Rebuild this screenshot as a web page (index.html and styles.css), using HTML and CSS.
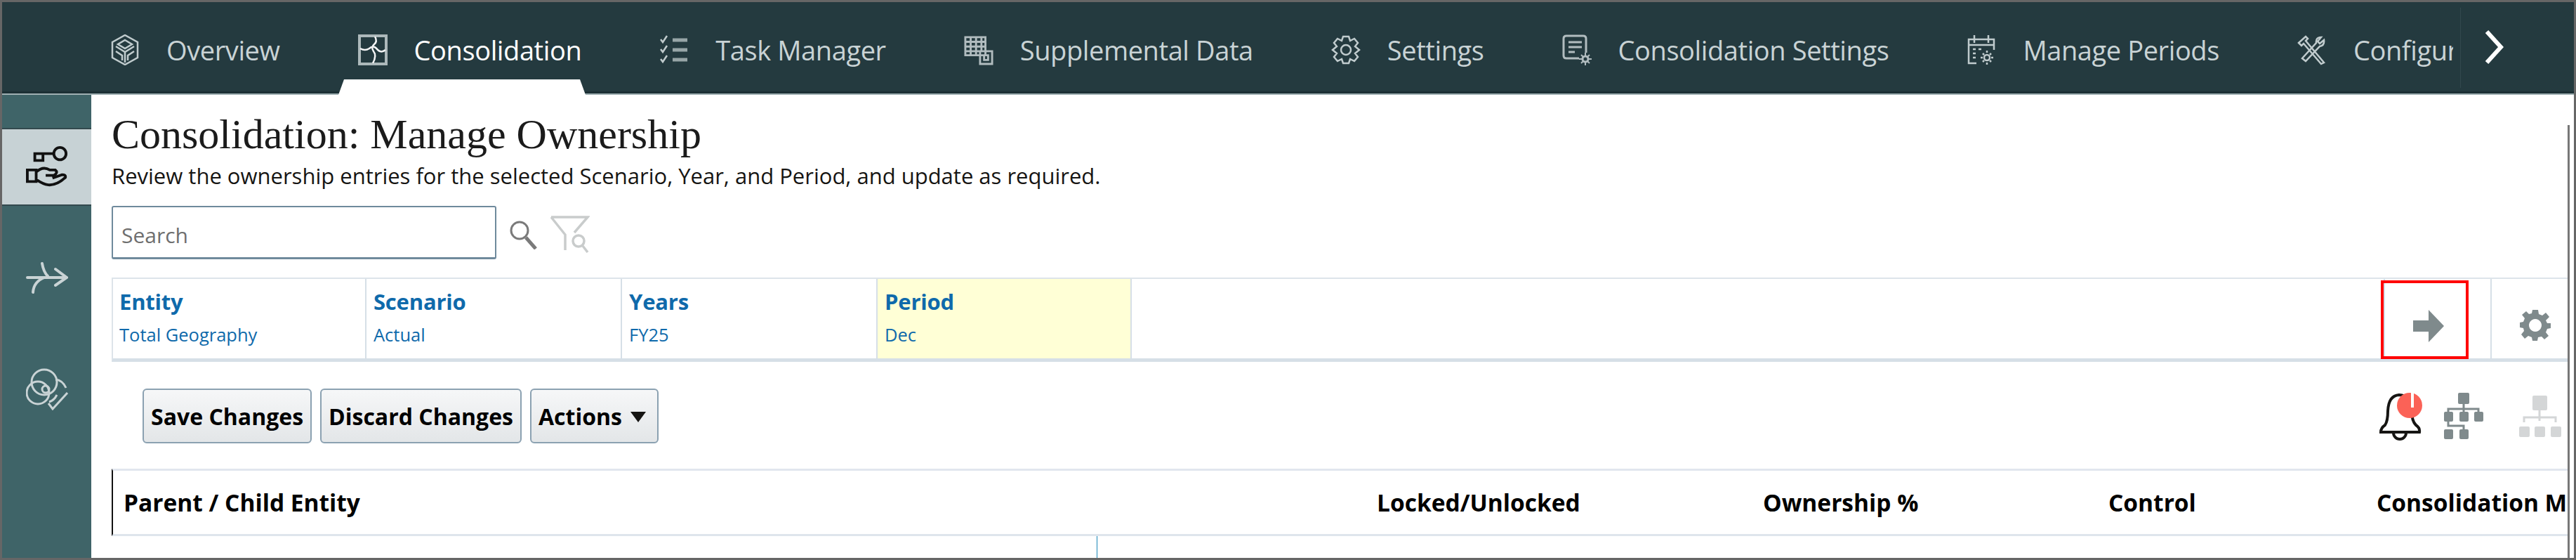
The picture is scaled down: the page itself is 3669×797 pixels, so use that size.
FILE: index.html
```html
<!DOCTYPE html>
<html lang="en">
<head>
  <meta charset="UTF-8">
  <title>Consolidation: Manage Ownership</title>
  <link rel="stylesheet" href="styles.css">
</head>
<body>
  <div class="frame">
    <!-- Top navigation -->
    <header class="topbar">
      <nav class="nav-items">
        <a class="nav-item">
          <svg class="nav-icon" viewBox="0 0 42 44"><path d="M21 1 39 11V33L21 43 3 33V11Z M21 8 31 14 21 20 11 14Z M8 17 21 25 34 17 M8 24 17 30V37 M34 24 25 30V37 M21 25V40"/></svg>
          <span>Overview</span>
        </a>
        <a class="nav-item active">
          <svg class="nav-icon" viewBox="0 0 42 44"><rect class="icon-frame" x="2" y="2" width="38" height="40"/><path d="M24 3Q28 10 23 14 18 18 22 24 27 30 21 41 M3 20Q10 24 16 20 22 14 28 22 33 27 39 22"/></svg>
          <span>Consolidation</span>
        </a>
        <a class="nav-item">
          <svg class="nav-icon" viewBox="0 0 42 44"><path d="M2 7l3 4 6-9 M2 21l3 4 6-9 M2 35l3 4 6-9"/><path class="icon-bar" d="M19 8H40 M19 22H40 M19 36H40"/></svg>
          <span>Task Manager</span>
        </a>
        <a class="nav-item">
          <svg class="nav-icon heavy" viewBox="0 0 44 44"><path d="M2 3H32V30H2Z M2 10H32 M2 17H32 M2 24H24 M10 3V30 M18 3V30 M26 3V24 M24 24H42V43H24Z M30 30h6v7h-6z"/></svg>
          <span>Supplemental Data</span>
        </a>
        <a class="nav-item">
          <svg class="nav-icon" viewBox="0 0 42 44"><circle cx="21" cy="22" r="7"/><path d="M17 3H25L27 9 33 6 38 12 34 17 40 22 34 27 38 32 33 38 27 35 25 41H17L15 35 9 38 4 32 8 27 2 22 8 17 4 12 9 6 15 9Z"/></svg>
          <span>Settings</span>
        </a>
        <a class="nav-item">
          <svg class="nav-icon heavy" viewBox="0 0 42 44"><path d="M24 34H6Q2 34 2 30V6Q2 2 6 2H30Q34 2 34 6V26 M9 11H28 M9 18H28 M9 25H18"/><circle cx="33" cy="35" r="4"/><path class="icon-thin" d="M33 26v4 M33 40v4 M24 35h4 M38 35h4 M27 29l3 3 M36 38l3 3 M39 29l-3 3 M30 38l-3 3"/></svg>
          <span>Consolidation Settings</span>
        </a>
        <a class="nav-item">
          <svg class="nav-icon" viewBox="0 0 42 44"><path d="M14 41H3V7H39V22 M11 1V12 M31 1V12 M3 15H39 M9 21h4 M17 21h4 M9 27h4 M9 33h4"/><circle cx="29" cy="33" r="4"/><path d="M29 23v3 M29 40v3 M20 33h3 M35 33h3 M23 27l2 2 M33 37l2 2 M35 27l-2 2 M25 37l-2 2"/></svg>
          <span>Manage Periods</span>
        </a>
        <a class="nav-item">
          <svg class="nav-icon" viewBox="0 0 42 44"><path d="M2 12 12 3l3 3-3 3 26 31-4 2L9 13l-3 3Z M34 4l-5 6 3 3 6-5q1 8-6 9L12 38 7 34 27 12q-1-8 7-8Z"/></svg>
          <span>Configuration</span>
        </a>
      </nav>
      <div class="nav-next">
        <svg viewBox="0 0 28 50"><path d="M4 3 24 25 4 47"/></svg>
      </div>
    </header>

    <div class="body-row">
      <!-- Left tabs -->
      <aside class="side">
        <div class="side-tab active">
          <svg viewBox="0 0 62 62" class="side-icon"><circle cx="50" cy="11" r="9"/><path d="M41 11H13V21H25V11 M2 35H15V52H2Z M15 38Q25 29 35 35H43Q48 39 41 43H29 M15 49Q25 56 33 57 45 58 58 46 59 42 53 42L39 47"/></svg>
        </div>
        <div class="side-tab">
          <svg viewBox="0 0 60 46" class="side-icon arrow"><path d="M2 22H58 M42 10 58 22 42 33 M23 2Q25 14 31 20 M10 43Q11 28 26 22"/></svg>
        </div>
        <div class="side-tab">
          <svg viewBox="0 0 60 60" class="side-icon"><circle cx="26" cy="20" r="18"/><circle cx="17" cy="35" r="16"/><path d="M57 28Q52 17 42 16 M44 38Q40 46 33 48"/><circle cx="28" cy="30" r="5"/><path d="M32 50 38 58 59 35"/></svg>
        </div>
      </aside>

      <main class="content">
        <h1 class="page-title">Consolidation: Manage Ownership</h1>
        <p class="page-desc">Review the ownership entries for the selected Scenario, Year, and Period, and update as required.</p>

        <div class="search-row">
          <input class="search-box" type="text" placeholder="Search">
          <svg class="search-icon" viewBox="0 0 41 42"><circle cx="15" cy="15" r="12"/><path class="thick" d="M24 25 38 41"/></svg>
          <svg class="filter-icon" viewBox="0 0 58 54"><path d="M3 3H55L36 25 M3 3 23 28V50"/><circle cx="42" cy="37" r="8"/><path d="M48 44 55 53"/></svg>
        </div>

        <!-- Point of view bar -->
        <div class="pov">
          <div class="pov-cell first">
            <div class="pov-label">Entity</div>
            <div class="pov-value">Total Geography</div>
          </div>
          <div class="pov-cell">
            <div class="pov-label">Scenario</div>
            <div class="pov-value">Actual</div>
          </div>
          <div class="pov-cell">
            <div class="pov-label">Years</div>
            <div class="pov-value">FY25</div>
          </div>
          <div class="pov-cell changed">
            <div class="pov-label">Period</div>
            <div class="pov-value">Dec</div>
          </div>
          <div class="pov-spacer"></div>
          <div class="pov-go">
            <svg viewBox="0 0 44 46"><path d="M0 15H22V0L44 23 22 46V31H0Z"/></svg>
            <span class="go-mark"></span>
          </div>
          <div class="pov-gear">
            <svg viewBox="0 0 44 44"><path d="M18 0H26L27 6 32 8 37 4 42 10 37 15 39 19 44 19V26L39 27 37 32 41 37 35 42 31 38 26 39 25 44H18L17 39 12 37 7 41 2 35 6 30 5 26 0 25V18L5 17 7 12 3 7 9 2 13 6 17 5Z M22 13a9 9 0 1 0 .01 0Z" fill-rule="evenodd"/></svg>
          </div>
        </div>

        <div class="toolbar">
          <button class="btn">Save Changes</button>
          <button class="btn">Discard Changes</button>
          <button class="btn">Actions <span class="caret"></span></button>
          <div class="tool-icons">
            <span class="bell">
              <svg viewBox="0 0 62 68"><path d="M4 56Q4 50 10 46 14 40 14 26 15 4 30 3 46 3 48 26 48 40 54 46 60 50 59 56Z M22 57a9 9 0 0 0 18 0"/></svg>
              <span class="bell-badge"></span>
            </span>
            <svg class="tree-icon" viewBox="0 0 58 66"><rect x="21" y="0" width="16" height="16" rx="2"/><rect x="1" y="27" width="13" height="14" rx="2"/><rect x="23" y="27" width="13" height="14" rx="2"/><rect x="44" y="27" width="13" height="14" rx="2"/><rect x="1" y="52" width="13" height="14" rx="2"/><rect x="23" y="52" width="13" height="14" rx="2"/><path d="M29 14V27 M7 27V23H50V27 M7 41V47H29V52"/></svg>
            <svg class="tree-icon off" viewBox="0 0 60 60"><rect x="19" y="0" width="21" height="21" rx="2"/><rect x="0" y="44" width="15" height="15" rx="2"/><rect x="22" y="44" width="15" height="15" rx="2"/><rect x="45" y="44" width="15" height="15" rx="2"/><path d="M29 21V36 M7 38V31H52V38"/></svg>
          </div>
        </div>

        <!-- Ownership table, header only -->
        <div class="grid-head">
          <div class="col col-entity">Parent / Child Entity</div>
          <div class="col col-lock">Locked/Unlocked</div>
          <div class="col col-own">Ownership %</div>
          <div class="col col-ctrl">Control</div>
          <div class="col col-cons">Consolidation Method</div>
        </div>
        <div class="grid-body"><span class="col-mark"></span></div>
      </main>
      <div class="scroll-track"></div>
    </div>
  </div>
</body>
</html>
```

FILE: styles.css
```css
* {
  box-sizing: border-box;
}
html, body {
  margin: 0;
  height: 100%;
  overflow: hidden;
}
body {
  font-family: "Open Sans", "Noto Sans", sans-serif;
  background: #fff;
  color: #000;
}
.frame {
  height: 797px;
  border: 3px solid #666;
  display: flex;
  flex-direction: column;
  overflow: hidden;
}

/* top bar */
.topbar {
  height: 132px;
  flex: none;
  background: #243a3f;
  border-bottom: 2px solid #9fb0b3;
  box-shadow: inset 0 -3px 0 #1c3035;
  display: flex;
}
.nav-items {
  width: 3491px;
  height: 132px;
  padding-left: 154px;
  display: flex;
  gap: 111px;
  align-items: flex-start;
  overflow: hidden;
  flex: none;
  position: relative;
}
.nav-item {
  display: flex;
  align-items: center;
  gap: 38px;
  height: 44px;
  margin-top: 46px;
  color: #c9d3d5;
  font-size: 38px;
  white-space: nowrap;
  letter-spacing: -0.4px;
  flex: none;
}
.nav-item.active {
  color: #fff;
}
.nav-item.active::before {
  content: "";
  position: absolute;
  left: 479px;
  width: 352px;
  top: 110px;
  height: 22px;
  background: #fff;
  clip-path: polygon(8px 0, 344px 0, 352px 100%, 0 100%);
}
.nav-icon {
  width: 42px;
  height: 44px;
  flex: none;
  fill: none;
  stroke: currentColor;
  stroke-width: 2.5;
  opacity: 0.95;
}
.nav-icon.heavy {
  stroke: #b9c4c6;
  stroke-width: 3;
}
.nav-icon .icon-thin {
  stroke-width: 2;
}
.nav-icon .icon-bar {
  stroke: #9eabad;
  stroke-width: 5;
}
.nav-icon .icon-frame {
  stroke: #b4bfc1;
  stroke-width: 4;
}
.nav-next {
  flex: 1;
  margin: 8px 0 8px 10px;
  border-left: 1px solid #33494e;
  padding: 31px 0 0 33px;
}
.nav-next svg {
  display: block;
  width: 28px;
  height: 50px;
  fill: none;
  stroke: #fff;
  stroke-width: 6;
}

.body-row {
  flex: 1;
  display: flex;
  min-height: 0;
  position: relative;
}

/* left tabs */
.side {
  width: 127px;
  flex: none;
  background: #3f6468;
  padding-top: 47px;
}
.side-tab {
  height: 111px;
  display: flex;
  align-items: center;
  justify-content: center;
  margin-bottom: 47px;
  padding-left: 1px;
}
.side-tab.active {
  background: #c7d2d5;
  border-top: 2px solid #33494e;
  border-bottom: 2px solid #33494e;
}
.side-icon {
  width: 60px;
  height: 60px;
  fill: none;
  stroke: #c9d3d5;
  stroke-width: 3;
}
.side-icon.arrow {
  height: 46px;
  stroke-width: 4;
  stroke-linecap: round;
}
.side-tab.active .side-icon {
  stroke: #111;
  stroke-width: 4;
}

/* page content */
.content {
  flex: 1;
  min-width: 0;
  padding-left: 29px;
  overflow: hidden;
}
.page-title {
  margin: 23px 0 0;
  font-family: "Liberation Serif", serif;
  font-weight: normal;
  font-size: 60px;
  line-height: 66px;
  color: #1b1b1b;
}
.page-desc {
  margin: 6px 0 0;
  font-size: 31px;
  line-height: 40px;
  color: #161513;
  white-space: nowrap;
}
.search-row {
  display: flex;
  align-items: flex-start;
  margin-top: 23px;
}
.search-box {
  width: 548px;
  height: 76px;
  padding: 8px 12px 0;
  border: 2px solid #6f8a9c;
  border-bottom-width: 3px;
  border-radius: 3px;
  font: 30px "Open Sans", sans-serif;
}
.search-box::placeholder {
  color: #6f6f6f;
  opacity: 1;
}
.search-icon {
  width: 41px;
  height: 42px;
  margin: 20px 0 0 18px;
  fill: none;
  stroke: #7a7a7a;
  stroke-width: 3;
}
.search-icon .thick {
  stroke-width: 5;
}
.filter-icon {
  width: 58px;
  height: 54px;
  margin: 13px 0 0 16px;
  fill: none;
  stroke: #c9cccc;
  stroke-width: 3.5;
}

/* point of view */
.pov {
  display: flex;
  height: 120px;
  margin-top: 26px;
  border-top: 2px solid #dde4ea;
  border-bottom: 5px solid #d6dfe7;
  border-left: 2px solid #dde4ea;
}
.pov-cell {
  width: 364px;
  padding: 12px 0 0 10px;
  border-right: 2px solid #d6dfe7;
  flex: none;
}
.pov-cell.first {
  width: 361px;
  padding-left: 9px;
}
.pov-cell.changed {
  background: #ffffd6;
  width: 362px;
}
.pov-label {
  color: #0f6aab;
  font-size: 31px;
  font-weight: 700;
  line-height: 40px;
  letter-spacing: -0.2px;
}
.pov-value {
  color: #0f6aab;
  font-size: 25.5px;
  line-height: 34px;
  margin-top: 10px;
}
.pov-spacer {
  width: 1785px;
  flex: none;
  border-right: 2px solid #d6dfe7;
}
.pov-go {
  width: 152px;
  flex: none;
  border-right: 2px solid #d6dfe7;
  padding: 44px 0 0 40px;
  position: relative;
}
.pov-go svg {
  display: block;
  width: 44px;
  height: 46px;
  fill: #7f8a8c;
}
.go-mark {
  position: absolute;
  left: -6px;
  top: 2px;
  width: 125px;
  height: 112px;
  border: 4px solid #f00;
}
.pov-gear {
  flex: 1;
  padding: 44px 0 0 40px;
}
.pov-gear svg {
  display: block;
  width: 44px;
  height: 44px;
  fill: #7f8a8c;
}

/* toolbar */
.toolbar {
  display: flex;
  align-items: flex-start;
  height: 152px;
  padding: 38px 0 0 44px;
  gap: 12px;
  position: relative;
}
.btn {
  height: 78px;
  padding: 0 10px;
  border: 2px solid #8ba1b1;
  border-radius: 6px;
  background: linear-gradient(#f6f7f8, #e3e6e8);
  color: #000;
  font: 700 32px "Open Sans", sans-serif;
  white-space: nowrap;
}
.caret {
  display: inline-block;
  width: 0;
  height: 0;
  margin: 0 6px 0 4px;
  vertical-align: 4px;
  border-left: 11px solid transparent;
  border-right: 11px solid transparent;
  border-top: 15px solid #161513;
}
.tool-icons {
  position: absolute;
  left: 3228px;
  top: 44px;
  display: flex;
  align-items: flex-start;
  gap: 31px;
}
.bell {
  display: block;
  position: relative;
  width: 62px;
  height: 68px;
}
.bell svg {
  display: block;
  width: 62px;
  height: 68px;
  fill: none;
  stroke: #161513;
  stroke-width: 4;
}
.bell-badge {
  position: absolute;
  left: 27px;
  top: 0;
  width: 36px;
  height: 36px;
  border-radius: 50%;
  background: #fb6257;
}
.bell-badge::after {
  content: "";
  position: absolute;
  left: 20px;
  top: 0;
  width: 4px;
  height: 21px;
  background: #fff;
}
.tree-icon {
  width: 58px;
  height: 66px;
  fill: #7f8a8c;
  stroke: none;
}
.tree-icon path {
  fill: none;
  stroke: #7f8a8c;
  stroke-width: 3;
}
.tree-icon.off {
  width: 60px;
  height: 60px;
  margin: 4px 0 0 19px;
  fill: #d4d6d7;
}
.tree-icon.off path {
  stroke: #d4d6d7;
}

/* grid */
.grid-head {
  height: 96px;
  display: flex;
  align-items: center;
  border-top: 3px solid #e1e6ee;
  border-bottom: 3px solid #dfe5ec;
  border-left: 2px solid #111;
  font-size: 33.5px;
  font-weight: 700;
  white-space: nowrap;
}
.col {
  flex: none;
}
.col-entity {
  width: 1800px;
  padding-left: 15px;
}
.col-lock {
  width: 550px;
}
.col-own {
  width: 492px;
}
.col-ctrl {
  width: 382px;
}
.grid-body {
  height: 40px;
  padding-left: 1403px;
}
.col-mark {
  display: block;
  width: 1px;
  height: 32px;
  background: #1a87b8;
}
.scroll-track {
  position: absolute;
  right: 0;
  top: 43px;
  bottom: 0;
  width: 9px;
  background: #fff;
  border-left: 3px solid #777;
}
```
